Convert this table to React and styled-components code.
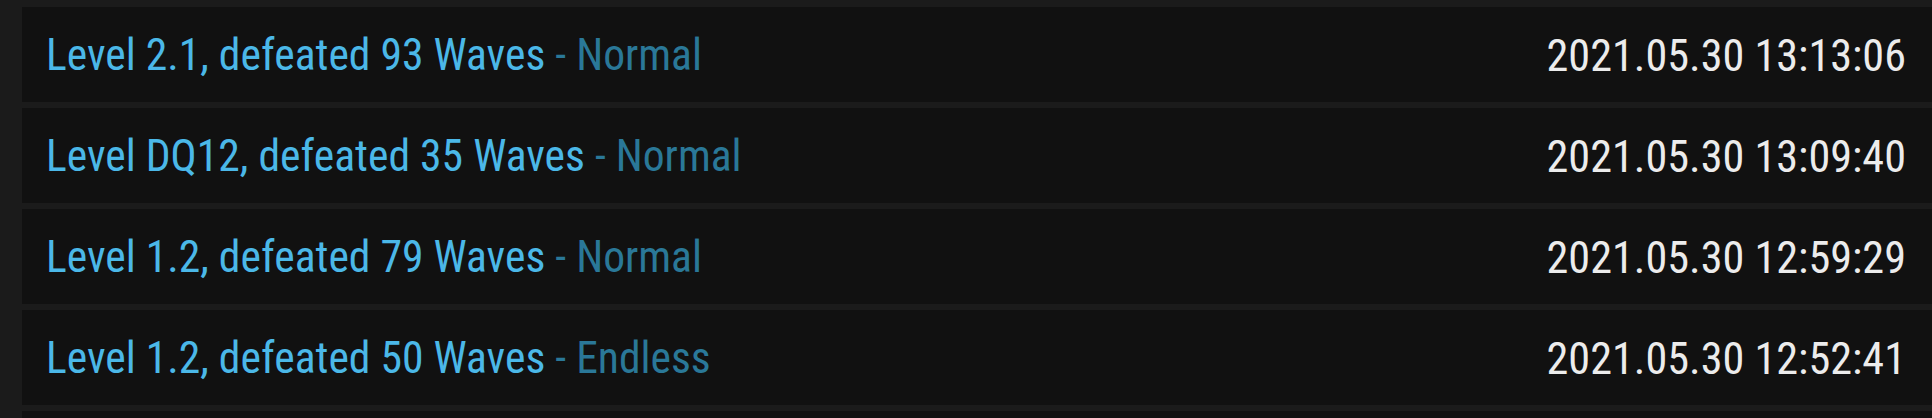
import React from "react";
import styled, { createGlobalStyle } from "styled-components";

const GlobalStyle = createGlobalStyle`
  html, body {
    margin: 0;
    padding: 0;
    background: #1b1b1b;
  }
`;

const List = styled.div`
  display: flex;
  flex-direction: column;
  gap: 6px;
  padding: 7px 0 0 22px;
  font-family: "Roboto Condensed", Roboto, "Liberation Sans", sans-serif;
`;

const Row = styled.div`
  display: flex;
  align-items: center;
  justify-content: space-between;
  height: 95px;
  padding: 2px 26px 0 24px;
  box-sizing: border-box;
  background: #111111;
`;

const Title = styled.span`
  color: #4bb8e8;
  font-size: 43.6px;
  white-space: nowrap;
`;

const Mode = styled.span`
  color: #2a7898;
`;

const Time = styled.span`
  color: #ececec;
  font-size: 44.2px;
  white-space: nowrap;
`;

const runs = [
  { level: "2.1", waves: 93, mode: "Normal", time: "2021.05.30 13:13:06" },
  { level: "DQ12", waves: 35, mode: "Normal", time: "2021.05.30 13:09:40" },
  { level: "1.2", waves: 79, mode: "Normal", time: "2021.05.30 12:59:29" },
  { level: "1.2", waves: 50, mode: "Endless", time: "2021.05.30 12:52:41" },
];

export default function App() {
  return (
    <>
      <GlobalStyle />
      <List>
        {runs.map((r, i) => (
          <Row key={i}>
            <Title>
              Level {r.level}, defeated {r.waves} Waves <Mode>- {r.mode}</Mode>
            </Title>
            <Time>{r.time}</Time>
          </Row>
        ))}
        <Row />
      </List>
    </>
  );
}
